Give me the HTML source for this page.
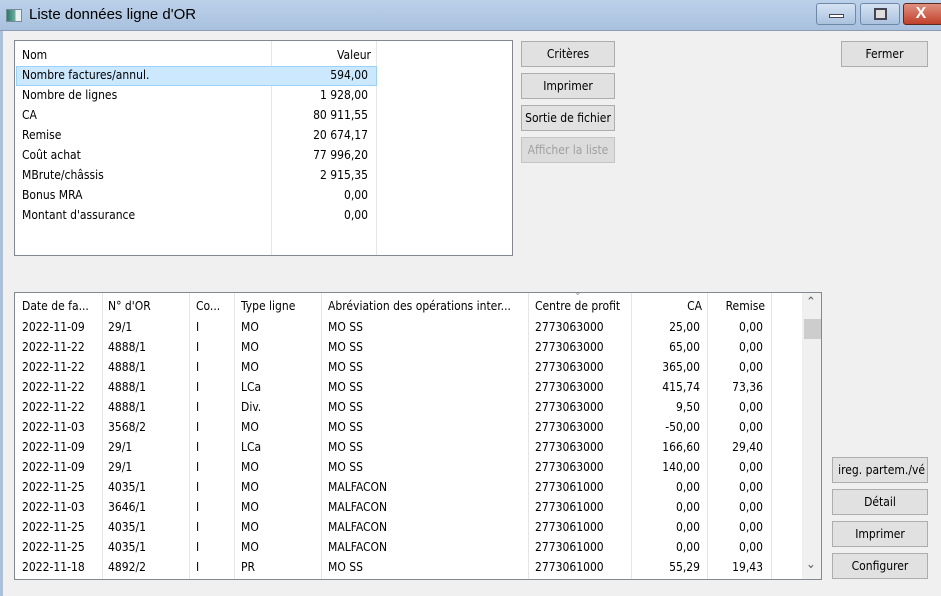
<!DOCTYPE html>
<html><head><meta charset="utf-8"><style>
*{margin:0;padding:0;box-sizing:border-box}
body{width:941px;height:596px;overflow:hidden;background:#f0f0f0;font-family:"DejaVu Sans Condensed","Liberation Sans",sans-serif;font-size:12px;color:#000;position:relative}
.abs{position:absolute}
#title{left:0;top:0;width:941px;height:31px;background:linear-gradient(#bcd1ea,#a9c1de);border-bottom:1px solid #8c9bb0}
#title .t{left:29px;top:6px;font-family:"Liberation Sans",sans-serif;font-size:15px;color:#000}
.frame{background:#aac0dc}
.btn{position:absolute;background:#e1e1e1;border:1px solid #adadad;text-align:center;line-height:25px;font-size:12px;white-space:nowrap;overflow:hidden}
.dis{color:#a0a0a0;background:#dcdcdc;border-color:#c4c4c4}
.panel{position:absolute;background:#fff;border:1px solid #828790}
.tx{position:absolute;white-space:nowrap}
.vl{position:absolute;width:1px;background:#e5e5e5}
.r{text-align:right}
</style></head><body>
<div id="title" class="abs">
 <div class="abs" style="left:6px;top:9px;width:16px;height:13px;border:1px solid #7a8a9a;background:linear-gradient(90deg,#2a7a6a,#6fb0a0 60%,#e8f0f0 60%)"></div>
 <div class="abs t">Liste données ligne d'OR</div>
 <div class="abs" style="left:816px;top:3px;width:40px;height:22px;border:1px solid #6d88a8;border-radius:3px;background:linear-gradient(#d5e3f3,#aac2df)"><div class="abs" style="left:12px;top:10px;width:15px;height:4px;background:#fff;border:1px solid #445"></div></div>
 <div class="abs" style="left:860px;top:3px;width:40px;height:22px;border:1px solid #6d88a8;border-radius:3px;background:linear-gradient(#d5e3f3,#aac2df)"><div class="abs" style="left:13px;top:4px;width:13px;height:12px;border:2px solid #445;background:#ddd"></div></div>
 <div class="abs" style="left:903px;top:3px;width:40px;height:22px;border:1px solid #5a2a20;border-radius:3px;background:linear-gradient(#e09080,#c0402a);color:#fff;font:bold 16px 'Liberation Sans',sans-serif;text-align:center;line-height:20px;padding-right:4px">X</div>
</div>
<div class="abs frame" style="left:0;top:31px;width:3px;height:565px"></div>

<div class="panel" style="left:14px;top:40px;width:499px;height:216px">
 <div class="vl" style="left:256px;top:0;height:214px"></div>
 <div class="vl" style="left:361px;top:0;height:214px"></div>
 <div class="tx" style="left:7px;top:7px">Nom</div>
 <div class="tx r" style="left:260px;width:96px;top:7px">Valeur</div>
 <div class="abs" style="left:1px;top:25px;width:361px;height:20px;background:#cce8ff;border:1px solid #99d1ff"></div>
</div>
<div id="topdata"></div>

<div class="btn" style="left:521px;top:41px;width:94px;height:26px">Critères</div>
<div class="btn" style="left:521px;top:73px;width:94px;height:26px">Imprimer</div>
<div class="btn" style="left:521px;top:105px;width:94px;height:26px">Sortie de fichier</div>
<div class="btn dis" style="left:521px;top:137px;width:94px;height:26px">Afficher la liste</div>
<div class="btn" style="left:841px;top:41px;width:87px;height:26px">Fermer</div>

<div class="panel" style="left:14px;top:292px;width:808px;height:288px">
 <div class="abs" style="left:787px;top:0;width:19px;height:286px;background:#f0f0f0"></div>
 <div class="abs" style="left:789px;top:26px;width:17px;height:20px;background:#cdcdcd"></div>
 <div class="tx" style="left:791px;top:2px;color:#606060;font-size:13px">&#8963;</div>
 <div class="tx" style="left:791px;top:264px;color:#606060;font-size:13px">&#8964;</div>
 <div class="tx" style="left:559px;top:-6px;color:#999;font-size:10px">&#8964;</div>
</div>
<div id="botdata"></div>

<div class="btn" style="left:832px;top:457px;width:96px;height:26px;text-align:right;padding-right:2px">ireg. partem./vé</div>
<div class="btn" style="left:832px;top:489px;width:96px;height:26px">Détail</div>
<div class="btn" style="left:832px;top:521px;width:96px;height:26px">Imprimer</div>
<div class="btn" style="left:832px;top:553px;width:96px;height:26px">Configurer</div>

<script>
(function(){
var tdata=[["Nombre factures/annul.","594,00"],["Nombre de lignes","1 928,00"],["CA","80 911,55"],["Remise","20 674,17"],["Coût achat","77 996,20"],["MBrute/châssis","2 915,35"],["Bonus MRA","0,00"],["Montant d'assurance","0,00"]];
var h="";
tdata.forEach(function(r,i){var y=68+i*20;h+='<div class="tx" style="left:22px;top:'+y+'px">'+r[0]+'</div><div class="tx r" style="left:270px;width:98px;top:'+y+'px">'+r[1]+'</div>';});
document.getElementById("topdata").innerHTML=h;
var cols=[22,108,196,241,328,535];
var dv=[102,189,234,321,528,631,707,771];
var rows=[["2022-11-09","29/1","I","MO","MO SS","2773063000","25,00","0,00"],["2022-11-22","4888/1","I","MO","MO SS","2773063000","65,00","0,00"],["2022-11-22","4888/1","I","MO","MO SS","2773063000","365,00","0,00"],["2022-11-22","4888/1","I","LCa","MO SS","2773063000","415,74","73,36"],["2022-11-22","4888/1","I","Div.","MO SS","2773063000","9,50","0,00"],["2022-11-03","3568/2","I","MO","MO SS","2773063000","-50,00","0,00"],["2022-11-09","29/1","I","LCa","MO SS","2773063000","166,60","29,40"],["2022-11-09","29/1","I","MO","MO SS","2773063000","140,00","0,00"],["2022-11-25","4035/1","I","MO","MALFACON","2773061000","0,00","0,00"],["2022-11-03","3646/1","I","MO","MALFACON","2773061000","0,00","0,00"],["2022-11-25","4035/1","I","MO","MALFACON","2773061000","0,00","0,00"],["2022-11-25","4035/1","I","MO","MALFACON","2773061000","0,00","0,00"],["2022-11-18","4892/2","I","PR","MO SS","2773061000","55,29","19,43"]];
var hd=["Date de fa...","N° d'OR","Co...","Type ligne","Abréviation des opérations inter...","Centre de profit"];
h="";
dv.forEach(function(x){h+='<div class="vl" style="left:'+x+'px;top:293px;height:286px"></div>';});
hd.forEach(function(t,i){h+='<div class="tx" style="left:'+cols[i]+'px;top:299px">'+t+'</div>';});
h+='<div class="tx r" style="left:640px;width:62px;top:299px">CA</div><div class="tx r" style="left:710px;width:55px;top:299px">Remise</div>';
rows.forEach(function(r,j){var y=320+j*20;for(var i=0;i<6;i++)h+='<div class="tx" style="left:'+cols[i]+'px;top:'+y+'px">'+r[i]+'</div>';
h+='<div class="tx r" style="left:630px;width:70px;top:'+y+'px">'+r[6]+'</div><div class="tx r" style="left:700px;width:63px;top:'+y+'px">'+r[7]+'</div>';});
document.getElementById("botdata").innerHTML=h;
})();
</script>
</body></html>
